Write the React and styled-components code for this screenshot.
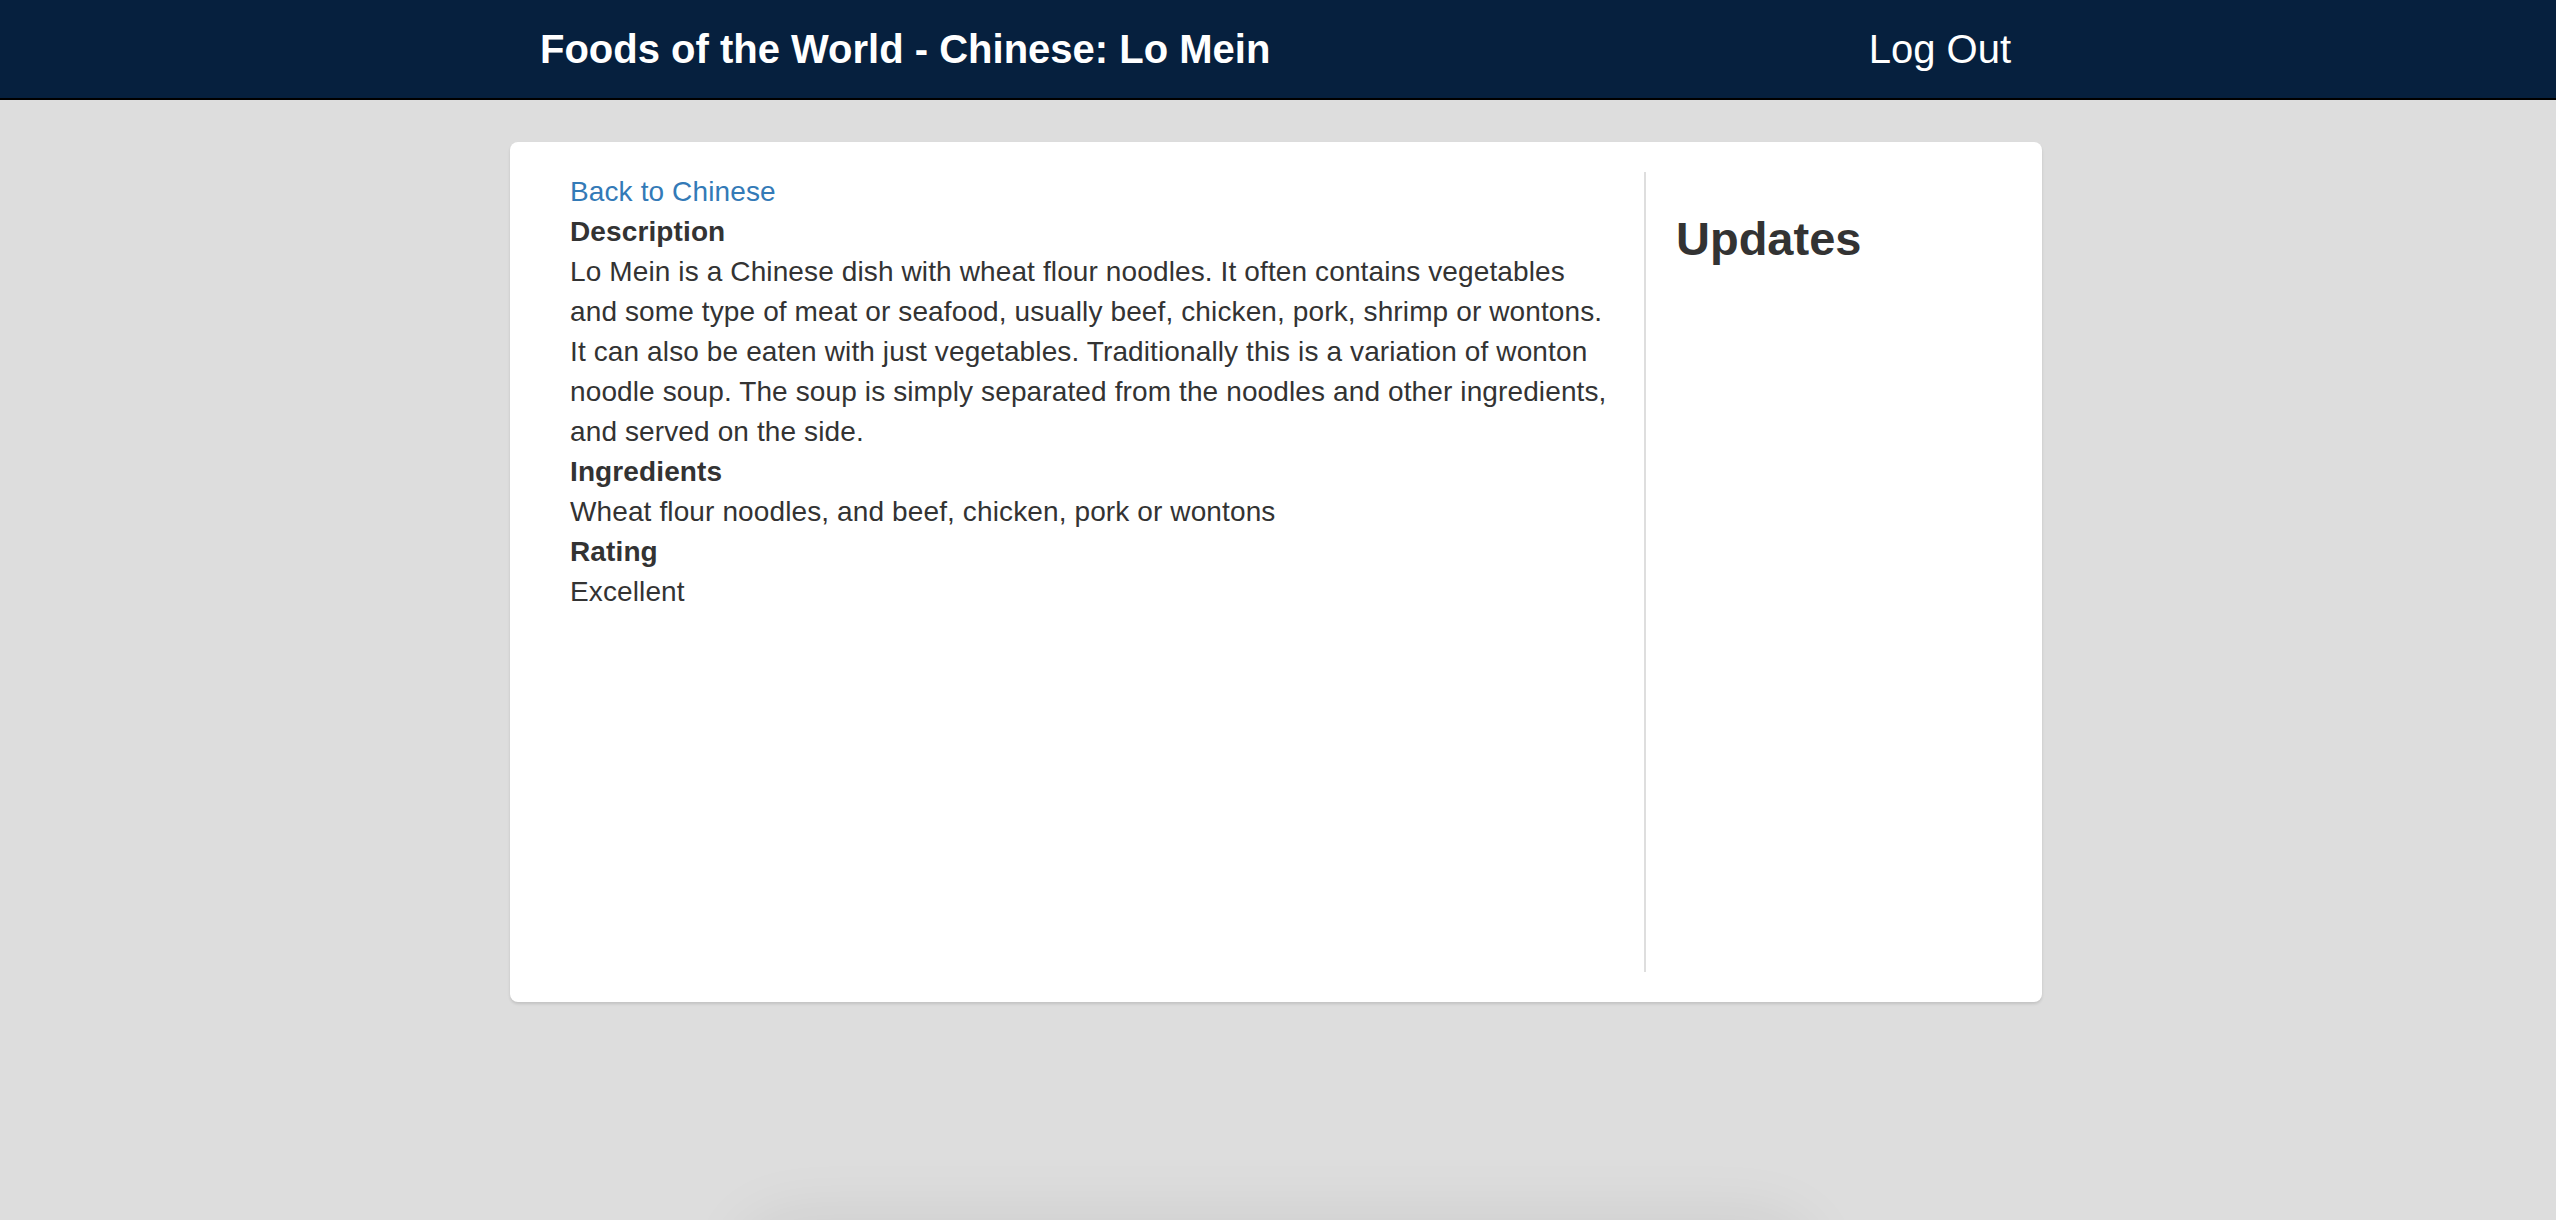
import styled, { createGlobalStyle } from "styled-components";

const GlobalStyle = createGlobalStyle`
  html, body {
    margin: 0;
    padding: 0;
    background: #dddddd;
    font-family: "Liberation Sans", Arial, Helvetica, sans-serif;
    color: #333333;
  }
`;

const Page = styled.div`
  box-sizing: border-box;
  height: 1220px;
  padding-right: 4px;
  overflow: hidden;
`;

const NavBar = styled.header`
  height: 98px;
  margin-right: -4px;
  background-color: #06203e;
  border-bottom: 2px solid #000000;
`;

const NavInner = styled.div`
  box-sizing: border-box;
  width: 1532px;
  height: 100%;
  margin: 0 auto;
  padding: 0 33px 0 28px;
  display: flex;
  align-items: center;
  justify-content: space-between;
`;

const Brand = styled.h1`
  margin: 0;
  font-size: 40px;
  font-weight: 700;
  color: #ffffff;
`;

const LogOut = styled.a`
  font-size: 40px;
  color: #ffffff;
  text-decoration: none;
  cursor: pointer;
`;

const Card = styled.main`
  box-sizing: border-box;
  width: 1532px;
  margin: 42px auto 0;
  padding: 30px;
  background: #ffffff;
  border-radius: 8px;
  box-shadow: 0 2px 3px rgba(0, 0, 0, 0.12);
  display: grid;
  grid-template-columns: 3fr 1fr;
`;

const Column = styled.section`
  box-sizing: border-box;
  min-height: 800px;
  padding: 0 30px;
  font-size: 28px;
  line-height: 40px;
  letter-spacing: 0.12px;
  border-left: ${(p) => (p.$divided ? "2px solid #dedede" : "none")};
`;

const BackLink = styled.a`
  color: #337ab7;
  text-decoration: none;
  cursor: pointer;
`;

const Label = styled.div`
  font-weight: 700;
`;

const Value = styled.div``;

const Heading = styled.h3`
  margin: 40px 0 20px;
  font-size: 47px;
  font-weight: 700;
  line-height: 53px;
  letter-spacing: 0;
`;

const Shelf = styled.div`
  width: 1060px;
  height: 200px;
  margin: 228px auto 0;
  border-radius: 40px;
  box-shadow: 0 -6px 70px rgba(0, 0, 0, 0.09);
`;

const details = [
  {
    label: "Description",
    value:
      "Lo Mein is a Chinese dish with wheat flour noodles. It often contains vegetables and some type of meat or seafood, usually beef, chicken, pork, shrimp or wontons. It can also be eaten with just vegetables. Traditionally this is a variation of wonton noodle soup. The soup is simply separated from the noodles and other ingredients, and served on the side.",
  },
  { label: "Ingredients", value: "Wheat flour noodles, and beef, chicken, pork or wontons" },
  { label: "Rating", value: "Excellent" },
];

export default function App() {
  return (
    <Page>
      <GlobalStyle />
      <NavBar>
        <NavInner>
          <Brand>Foods of the World - Chinese: Lo Mein</Brand>
          <LogOut>Log Out</LogOut>
        </NavInner>
      </NavBar>
      <Card>
        <Column>
          <BackLink>Back to Chinese</BackLink>
          {details.map((d) => (
            <div key={d.label}>
              <Label>{d.label}</Label>
              <Value>{d.value}</Value>
            </div>
          ))}
        </Column>
        <Column $divided>
          <Heading>Updates</Heading>
        </Column>
      </Card>
      <Shelf />
    </Page>
  );
}
